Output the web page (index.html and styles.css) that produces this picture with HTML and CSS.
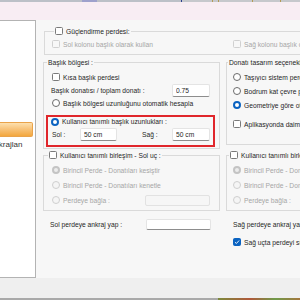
FILE: index.html
```html
<!DOCTYPE html>
<html lang="tr">
<head>
    <meta charset="UTF-8">
    <meta name="viewport" content="width=device-width, initial-scale=1.0">
    <title>Perde başlık ayarları</title>
    <link rel="stylesheet" href="styles.css">
</head>
<body>

<div class="topstrip"></div>
<div class="band"></div>

<div class="workspace">
    <div class="sidebar">
        <div class="side-item active"></div>
        <div class="side-item"><span>Ankrajlan</span></div>
    </div>

    <div class="form">
        <fieldset class="group wide">
            <legend><span class="cb"></span>Güçlendirme perdesi:</legend>
            <div class="pair">
                <div class="row off"><span class="cb dis"></span>Sol kolonu başlık olarak kullan</div>
                <div class="row off"><span class="cb dis"></span>Sağ kolonu başlık olarak kullan</div>
            </div>
        </fieldset>

        <fieldset class="group head-zone">
            <legend>Başlık bölgesi :</legend>
            <div class="body">
                <div class="row"><span class="cb"></span>Kısa başlık perdesi</div>
                <div class="row shift">Başlık donatısı / toplam donatı :<input class="field" type="text" value="0.75"></div>
                <div class="row"><span class="rb"></span>Başlık bölgesi uzunluğunu otomatik hesapla</div>
                <div class="highlight">
                    <div class="row short"><span class="rb on"></span>Kullanıcı tanımlı başlık uzunlukları :</div>
                    <div class="row tall">
                        <span class="lbl">Sol :</span>
                        <input class="field small" type="text" value="50 cm">
                        <span class="lbl right">Sağ :</span>
                        <input class="field" type="text" value="50 cm">
                    </div>
                </div>
            </div>
        </fieldset>

        <fieldset class="group options">
            <legend>Donatı tasarım seçenekleri :</legend>
            <div class="body">
                <div class="row mid"><span class="rb"></span>Taşıyıcı sistem perdesi olarak tasarla</div>
                <div class="row mid"><span class="rb"></span>Bodrum kat çevre perdesi olarak tasarla</div>
                <div class="row mid"><span class="rb on"></span>Geometriye göre otomatik belirle</div>
                <div class="row mid gap"><span class="cb"></span>Aplikasyonda daima göster</div>
            </div>
        </fieldset>

        <fieldset class="group joint">
            <legend><span class="cb"></span>Kullanıcı tanımlı birleşim - Sol uç :</legend>
            <div class="body">
                <div class="row wide-row off"><span class="rb dis on"></span>Birincil Perde - Donatıları kesiştir</div>
                <div class="row wide-row off"><span class="rb dis"></span>Birincil Perde - Donatıları kenetle</div>
                <div class="row wide-row off"><span class="rb dis"></span>Perdeye bağla :<input class="field long" type="text" disabled></div>
            </div>
        </fieldset>

        <fieldset class="group joint right-joint">
            <legend><span class="cb"></span>Kullanıcı tanımlı birleşim - Sağ uç :</legend>
            <div class="body">
                <div class="row wide-row off"><span class="rb dis on"></span>Birincil Perde - Donatıları kesiştir</div>
                <div class="row wide-row off"><span class="rb dis"></span>Birincil Perde - Donatıları kenetle</div>
                <div class="row wide-row off"><span class="rb dis"></span>Perdeye bağla :</div>
            </div>
        </fieldset>

        <div class="anchor">
            <div class="row">Sol perdeye ankraj yap :<input class="field long" type="text"></div>
        </div>

        <div class="anchor right-anchor">
            <div class="row">Sağ perdeye ankraj yap :</div>
            <div class="row">
                <span class="cb on"><svg viewBox="0 0 8 8" width="6" height="6"><path d="M1.3 4.2 L3.2 6 L6.8 2" fill="none" stroke="#fff" stroke-width="1.2"/></svg></span>Sağ uçta perdeyi sürekli kabul et
            </div>
        </div>
    </div>
</div>

<div class="footer"></div>
<div class="taskbar"></div>

</body>
</html>
```

FILE: styles.css
```css
* {
    box-sizing: border-box;
    margin: 0;
    padding: 0;
}

body {
    width: 300px;
    height: 300px;
    overflow: hidden;
    display: flex;
    flex-direction: column;
    background: #f7f7f7;
    font-family: "Liberation Sans", Arial, sans-serif;
    font-size: 6.7px;
    color: #262626;
}

.topstrip {
    height: 2px;
    flex-shrink: 0;
    background: linear-gradient(to right,
        #bcc0c7 82px, #9ea1cc 82px, #9ea1cc 97px, #bcc0c7 97px,
        #bcc0c7 181px, #2c3e8e 181px, #2c3e8e 182px, #c6c8cc 182px,
        #c6c8cc 212px, #b49a55 212px, #b49a55 213px, #c6c8cc 213px,
        #c6c8cc 218px, #b49a55 218px, #b49a55 219px, #c6c8cc 219px,
        #c6c8cc 252px, #b49a55 252px, #b49a55 253px, #c6c8cc 253px,
        #c6c8cc 280px, #b49a55 280px, #b49a55 281px, #c6c8cc 281px);
}

.band {
    height: 18px;
    flex-shrink: 0;
    background: #f8edf3;
}

.workspace {
    height: 258px;
    flex-shrink: 0;
    display: flex;
    overflow: hidden;
}

.sidebar {
    width: 36px;
    flex-shrink: 0;
    background: #fff;
    border: 1px solid #b3b3b3;
    border-left: none;
    overflow: hidden;
}

.side-item {
    height: 10px;
    line-height: 10px;
    font-size: 8px;
    color: #333;
    white-space: nowrap;
}

.side-item span {
    margin-left: -11px;
}

.side-item.active {
    height: 15px;
    width: 33px;
    margin-top: 101px;
    margin-bottom: 3px;
    border: 1px solid #eaa34a;
    border-left: none;
    border-radius: 0 2px 2px 0;
    background: linear-gradient(#fde0ae, #f8c47c 45%, #f3a73e);
}

.form {
    flex: 1;
    padding: 6.5px 0 0 7px;
    display: grid;
    grid-template-columns: 177px 140px;
    column-gap: 6px;
    align-content: start;
    align-items: start;
}

fieldset {
    border: 1px solid #dadada;
    min-width: 0;
}

legend {
    height: 9px;
    padding: 0 1px;
    display: flex;
    align-items: center;
    gap: 3px;
    white-space: nowrap;
    background: #f7f7f7;
}

.row {
    height: 13px;
    display: flex;
    align-items: center;
    gap: 3px;
    white-space: nowrap;
}

.off {
    color: #a6a6a6;
}

/* checkbox and radio marks */
.cb {
    width: 8px;
    height: 8px;
    flex-shrink: 0;
    border: 1px solid #7a7a7a;
    border-radius: 1.5px;
    background: #fff;
    display: flex;
    align-items: center;
    justify-content: center;
}

.cb.dis {
    border-color: #d0d0d0;
    background: #f7f7f7;
}

.cb.on {
    border-color: #0b63c1;
    background: #0b63c1;
}

.rb {
    width: 8px;
    height: 8px;
    flex-shrink: 0;
    border: 1px solid #6b6b6b;
    border-radius: 50%;
    background: #fff;
}

.rb.on {
    border: 2.3px solid #0b63c1;
}

.rb.dis {
    border-color: #cfcfcf;
    background: #f5f5f5;
}

.rb.dis.on {
    border: 2.3px solid #c4c4c4;
    background: #ececec;
}

.field {
    height: 13px;
    width: 38px;
    flex-shrink: 0;
    margin-left: auto;
    padding-left: 3px;
    border: 1px solid #e4e4e4;
    border-bottom-color: #8d8d8d;
    border-radius: 2px;
    background: #fff;
    font: inherit;
    color: #262626;
    outline: none;
}

.field:disabled {
    border-color: #e2e2e2;
    background: #f6f6f6;
}

/* Güçlendirme perdesi */
.wide {
    grid-column: 1 / -1;
    margin-left: 1px;
    padding: 2px 0 3.5px 7px;
}

.wide legend {
    margin-left: 2px;
}

.pair {
    display: grid;
    grid-template-columns: 181px auto;
}

/* Başlık bölgesi */
.head-zone {
    margin-top: 2.5px;
}

.head-zone legend {
    margin-left: 3px;
}

.head-zone .body {
    padding: 4px 4px 1px 8px;
}

.shift {
    margin-left: -1px;
}

.shift .field {
    margin-right: 5px;
}

.highlight {
    margin: 5.5px 0 0 -6px;
    padding: 0 3px 4px 3px;
    border: 2px solid #e0262b;
}

.row.short {
    height: 9px;
}

.row.tall {
    height: 14px;
    margin-top: 1px;
    gap: 0;
    padding-left: 1px;
}

.lbl {
    width: 28px;
}

.lbl.right {
    width: 30px;
    margin-left: 25px;
}

.field.small {
    width: 37px;
    margin-left: 0;
}

/* Donatı tasarım seçenekleri */
.options {
    margin-top: 2.5px;
    padding-bottom: 13px;
}

.options legend {
    margin-left: 1px;
}

.options .body {
    padding: 3.5px 0 0 6px;
}

.row.mid {
    height: 14px;
}

.row.gap {
    margin-top: 5px;
}

/* Kullanıcı tanımlı birleşim */
.joint {
    margin-top: 1.5px;
}

.joint legend {
    margin-left: 4px;
}

.right-joint legend {
    margin-left: 2px;
}

.joint .body {
    padding: 3px 4px 2px 8px;
}

.right-joint .body {
    padding-left: 6px;
}

.row.wide-row {
    height: 15px;
}

.field.long {
    width: 65px;
    height: 11px;
    margin-right: 5px;
}

/* ankraj rows */
.anchor {
    margin-top: 7px;
    padding: 0 4px 0 7px;
}

.right-anchor {
    padding-left: 7px;
}

.right-anchor .row + .row {
    margin-top: 5px;
}

.footer {
    height: 20px;
    flex-shrink: 0;
    background: #efefef;
}

.taskbar {
    height: 2px;
    flex-shrink: 0;
    background: linear-gradient(to right,
        #a9a9a9 218px, #7c8a3c 218px, #b0583a 250px, #6f9a4a 275px, #a4763d 300px);
}
```
